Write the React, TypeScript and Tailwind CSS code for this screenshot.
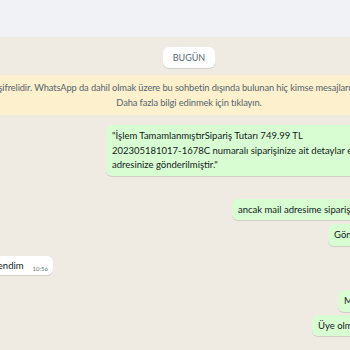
import React from 'react';

const font = { fontFamily: 'Lato, "Noto Sans", sans-serif' };

const Outgoing: React.FC<{ offset: string; children: React.ReactNode; className?: string }> = ({
  offset,
  children,
  className = '',
}) => (
  <div className={`flex ${offset} ${className}`}>
    <div className="shrink-0 whitespace-nowrap rounded-[6px] bg-[#d9fdd3] px-[6px] pt-[4px] pb-[3px] text-[9.5px] leading-[14.5px] text-[#111b21] shadow-[0_1px_0.5px_rgba(11,20,26,0.13)]">
      {children}
    </div>
  </div>
);

export default function App() {
  return (
    <div className="flex h-[350px] w-[350px] flex-col overflow-hidden bg-[#efeae2]" style={font}>
      <div className="h-[37px] shrink-0 bg-[#f0f2f5]" />

      <div className="mt-[10px] flex justify-center pl-[28px]">
        <div className="rounded-[6px] bg-white px-[10px] py-[3px] text-[9px] leading-[15px] text-[#54656f] shadow-[0_1px_0.5px_rgba(11,20,26,0.13)]">
          BUGÜN
        </div>
      </div>

      <div className="mt-[7px] flex h-[40px] shrink-0 flex-col items-center justify-center bg-[#fdf0cc] pl-[28px] text-[9.3px] leading-[15px] tracking-[-0.1px] text-[#54656f]">
        <div className="flex items-center whitespace-nowrap">
          <svg viewBox="0 0 10 12" className="mr-[3px] h-[9px] w-[8px] fill-[#54656f]">
            <path d="M5 0.5a3 3 0 0 0-3 3V5H1.3a.8.8 0 0 0-.8.8v5a.8.8 0 0 0 .8.8h7.4a.8.8 0 0 0 .8-.8v-5a.8.8 0 0 0-.8-.8H8V3.5a3 3 0 0 0-3-3Zm0 1.3a1.7 1.7 0 0 1 1.7 1.7V5H3.3V3.5A1.7 1.7 0 0 1 5 1.8Z" />
          </svg>
          Mesajlar uçtan uca şifrelidir. WhatsApp da dahil olmak üzere bu sohbetin dışında bulunan hiç kimse mesajlarınızı okuyamaz ve dinleyemez.
        </div>
        <div className="whitespace-nowrap">Daha fazla bilgi edinmek için tıklayın.</div>
      </div>

      <Outgoing offset="pl-[106px]" className="mt-[10px]">
        "İşlem TamamlanmıştırSipariş Tutarı 749.99 TL
        <br />
        202305181017-1678C numaralı siparişinize ait detaylar e-posta
        <br />
        adresinize gönderilmiştir."
      </Outgoing>

      <Outgoing offset="pl-[232px]" className="mt-[23px]">
        ancak mail adresime sipariş bilgileri gelmedi
      </Outgoing>

      <Outgoing offset="pl-[328px]" className="mt-[4px]">
        Gönderildi diyor
      </Outgoing>

      <div className="mt-[10px] flex w-[53px] justify-end">
        <div className="flex shrink-0 items-end whitespace-nowrap rounded-[6px] bg-white px-[5px] pt-[3px] pb-[2px] text-[9.5px] leading-[14.5px] text-[#111b21] shadow-[0_1px_0.5px_rgba(11,20,26,0.13)]">
          <span>Anladım, teşekkür ederim, şimdi öğrendim</span>
          <span className="ml-[9px] translate-y-[1px] text-[6px] leading-[11px] text-[#667781]">10:56</span>
        </div>
      </div>

      <Outgoing offset="pl-[338px]" className="mt-[15px]">
        Mail adresinizi kontrol ettiniz mi?
      </Outgoing>

      <Outgoing offset="pl-[312px]" className="mt-[3px]">
        Üye olmadan sipariş verdim
      </Outgoing>
    </div>
  );
}
